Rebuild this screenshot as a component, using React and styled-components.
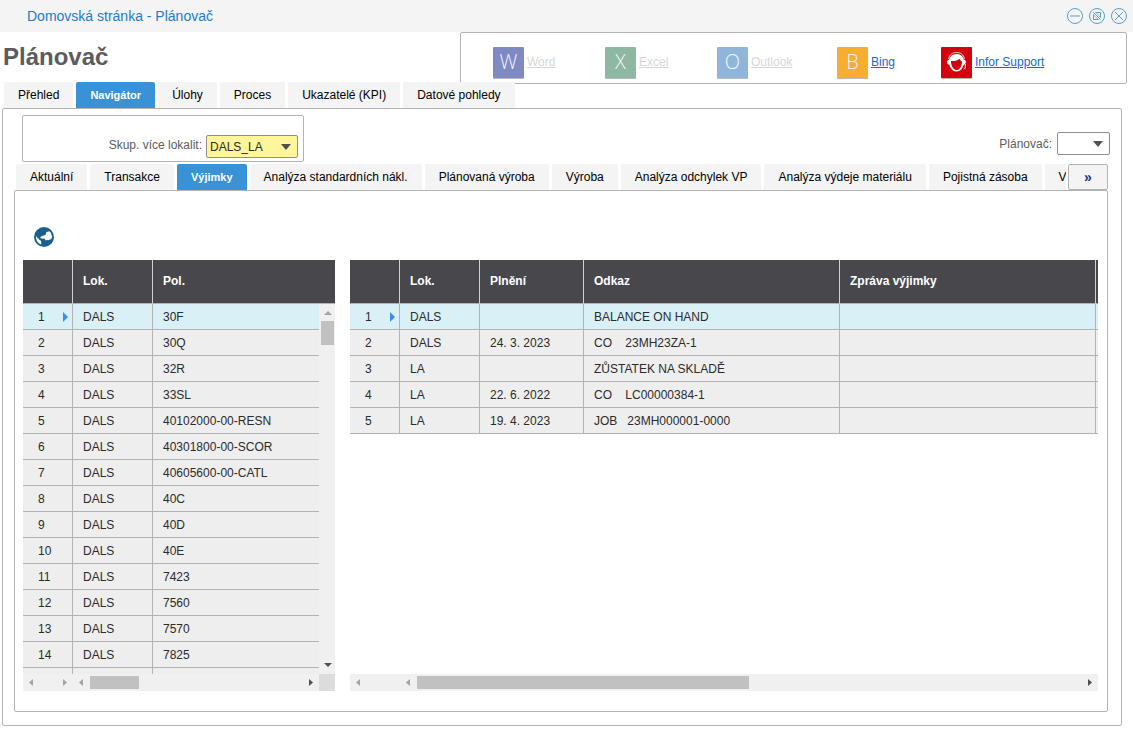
import styled, { createGlobalStyle, css } from 'styled-components'

const GlobalStyle = createGlobalStyle`
  * {
    box-sizing: border-box;
  }

  body {
    margin: 0;
    background: #fff;
    color: #2b2b2b;
    font-family: 'Liberation Sans', Arial, sans-serif;
    font-size: 12px;
    line-height: 16px;
  }

  button, select {
    font: inherit;
    margin: 0;
  }
`

const line = '#b3b3b3'
const blue = '#3992d6'

const TitleBar = styled.div`
  display: flex;
  align-items: center;
  justify-content: space-between;
  height: 32px;
  padding: 0 5px 0 27px;
  background: #f4f4f4;
  color: #1f7bc6;
  font-size: 14px;
`

const WindowButtons = styled.div`
  display: flex;
  gap: 4px;
`

const IconButton = styled.button`
  display: flex;
  padding: 0;
  border: none;
  background: none;
  cursor: pointer;
`

const Header = styled.header`
  display: flex;
  justify-content: space-between;
  height: 52px;
  padding: 0 6px 0 3px;
`

const Title = styled.h1`
  margin: 0;
  padding-top: 10px;
  color: #5c5b60;
  font-size: 24px;
  line-height: 30px;
`

const LinkBox = styled.div`
  display: grid;
  grid-template-columns: 112px 112px 120px 104px auto;
  align-items: center;
  width: 667px;
  padding: 8px 0 0 32px;
  border: 1px solid ${line};
  border-radius: 2px;
`

const AppLink = styled.a`
  display: flex;
  align-items: center;
  gap: 3px;
  color: ${props => props.$disabled ? '#d6d6d6' : '#1a66e0'};
  text-decoration: none;
`

const AppName = styled.span`
  text-decoration: underline;
`

const Tile = styled.span`
  display: flex;
  align-items: center;
  justify-content: center;
  width: 31px;
  height: 31px;
  border-radius: 1px;
  background: ${props => props.$color};
  box-shadow: 0 1px 0 #b9b9b9;
  color: rgba(255, 255, 255, 0.9);
  font-family: 'Open Sans', sans-serif;
  font-size: 20px;
  font-weight: 300;
`

const TabBar = styled.nav`
  position: relative;
  display: flex;
  height: 26px;
  ${props => props.$inner ? css`
    gap: 2px;
    margin: 2px 13px 0 13px;
  ` : css`
    gap: 3px;
    margin: -2px 0 0 4px;
  `}
`

const TabClip = styled.div`
  display: flex;
  flex: 1;
  gap: 3px;
  overflow: hidden;
`

const Tab = styled.button`
  flex: none;
  padding: 0 14px;
  border: none;
  border-radius: 2px 2px 0 0;
  background: ${props => props.$active ? blue : '#f4f4f4'};
  color: ${props => props.$active ? '#fff' : '#000'};
  font-size: ${props => props.$active ? '11px' : '12px'};
  font-weight: ${props => props.$active ? 'bold' : 'normal'};
  cursor: pointer;
`

const MoreButton = styled.button`
  width: 40px;
  padding: 0;
  border: 1px solid ${line};
  border-radius: 2px;
  background: #f4f4f4;
  color: #10398c;
  font-size: 14px;
  font-weight: bold;
`

const Panel = styled.main`
  margin: 0 11px 0 2px;
  border: 1px solid ${line};
  border-radius: 2px;
`

const InnerPanel = styled.section`
  margin: 0 13px 13px 11px;
  padding: 36px 9px 20px 8px;
  border: 1px solid ${line};
  border-radius: 2px;
`

const Filters = styled.div`
  display: flex;
  justify-content: space-between;
  align-items: flex-end;
  padding: 6px 11px 0 19px;
`

const GroupBox = styled.div`
  display: flex;
  align-items: flex-end;
  justify-content: flex-end;
  width: 282px;
  height: 47px;
  padding: 0 5px 3px;
  border: 1px solid ${line};
  border-radius: 2px;

  label {
    padding-bottom: 4px;
  }
`

const Field = styled.div`
  display: flex;
  align-items: center;
  gap: 4px;
  color: #5c5c5c;
`

const PlannerField = styled(Field)`
  padding-bottom: 7px;
  gap: 5px;
`

const SelectWrap = styled.div`
  position: relative;

  svg {
    position: absolute;
    top: 9px;
    right: 7px;
    pointer-events: none;
  }
`

const Select = styled.select`
  display: block;
  width: ${props => props.$width};
  height: 23px;
  padding: 0 3px;
  border: 1px solid #8e8e8e;
  border-radius: 2px;
  background: ${props => props.$required ? '#fff59a' : '#fff'};
  color: #2b2b2b;
  appearance: none;
`

const Toolbar = styled.div`
  display: flex;
  padding: 0 11px 13px;
`

const Grids = styled.div`
  display: flex;
  gap: 15px;
`

const Grid = styled.div`
  display: flex;
  flex-direction: column;
  flex: ${props => props.$width ? 'none' : '1'};
  width: ${props => props.$width};
  min-width: 0;
`

const GridMain = styled.div`
  display: flex;
  height: 414px;
`

const Viewport = styled.div`
  flex: 1;
  overflow: hidden;
`

const Table = styled.table`
  width: 100%;
  table-layout: fixed;
  border-collapse: separate;
  border-spacing: 0;
`

const Th = styled.th`
  height: 44px;
  padding: 0 0 1px ${props => props.$slim ? '0' : '10px'};
  border-bottom: 1px solid ${line};
  border-right: 1px solid #d0d0d0;
  background: #48474c;
  color: #fff;
  text-align: left;

  &:last-child {
    border-right: none;
  }
`

const Row = styled.tr`
  background: ${props => props.$selected ? '#daf0f7' : '#eee'};
`

const Td = styled.td`
  height: 26px;
  padding: 0 0 0 ${props => props.$slim ? '0' : '10px'};
  border-bottom: 1px solid ${line};
  border-right: 1px solid ${line};
  white-space: pre;

  &:last-child {
    border-right: none;
  }
`

const RowNumber = styled.div`
  display: flex;
  align-items: center;
  justify-content: space-between;
  padding: 0 4px 0 5px;
`

const Side = styled.div`
  display: flex;
  flex-direction: column;
  width: 16px;
`

const SideHead = styled.div`
  height: 44px;
  border-bottom: 1px solid ${line};
  background: #48474c;
`

const Bars = styled.div`
  display: flex;
  height: 17px;
`

const Scrollbar = styled.div`
  display: flex;
  flex-direction: ${props => props.$vertical ? 'column' : 'row'};
  flex: ${props => props.$width ? 'none' : '1'};
  width: ${props => props.$width};
  background: #f0f0f0;
`

const Track = styled.div`
  flex: 1;
  padding: ${props => props.$vertical ? '0 1px 0 2px' : '2px 0'};
`

const Thumb = styled.div`
  width: ${props => props.$vertical ? '100%' : props.$size};
  height: ${props => props.$vertical ? props.$size : '100%'};
  background: #c1c1c1;
`

const Corner = styled.div`
  width: 16px;
  background: #dcdcdc;
`

const ArrowButton = styled(IconButton)`
  width: ${props => props.$vertical ? '16px' : '17px'};
  height: 17px;
  align-items: center;
  justify-content: center;
  color: ${props => props.$dark ? '#505050' : '#a3a3a3'};
`

const shapes = {
  left: 'M10 5v7L6 8.5z',
  right: 'M7 5v7l4-3.5z',
  up: 'M5 11h8L9 7z',
  down: 'M5 6h8l-4 4z'
}

const Arrow = ({ dir, dark }) => (
  <ArrowButton
    type='button'
    aria-label={dir}
    $dark={dark}
    $vertical={dir === 'up' || dir === 'down'}
  >
    <svg width='17' height='17' fill='currentColor'><path d={shapes[dir]} /></svg>
  </ArrowButton>
)

const SelectArrow = () => (
  <svg width='10' height='6' fill='#505050'><path d='M0 0h10L5 6z' /></svg>
)

const MinimizeIcon = () => (
  <svg width='18' height='18' fill='none' stroke='#5a9dd0'>
    <circle cx='9' cy='9' r='7.5' />
    <path d='M4 9h10' />
  </svg>
)

const RestoreIcon = () => (
  <svg width='18' height='18' fill='none' stroke='#5a9dd0'>
    <circle cx='9' cy='9' r='7.5' />
    <path d='M7.5 5.5h5v5M5.5 7.5v5h5M5.5 5.5l7 7' />
    <path d='M8 5.5l4.5 5M5.5 8l5 4.5' strokeWidth='0.6' />
  </svg>
)

const CloseIcon = () => (
  <svg width='18' height='18' fill='none' stroke='#5a9dd0'>
    <circle cx='9' cy='9' r='7.5' />
    <path d='M5 5l8 8M13 5l-8 8' />
  </svg>
)

const SupportIcon = () => (
  <svg width='31' height='31' viewBox='0 0 31 31' fill='none'>
    <path d='M7.500 12C8.500 7.500 11.500 5.500 15.500 5.500s7 2 8 6.500' stroke='#fff' strokeWidth='0.8' />
    <path d='M15.500 7c4.500 0 7.500 3 7.500 7.500 0 5.500-3 10-7.500 10S8 20 8 14.500C8 10 11 7 15.500 7z' fill='#fff' />
    <path d='M8.500 12.500c-2 .5-2.500 1.500-2.500 2.500s.8 2.500 3 3zM22.500 12.500c1.800.5 2.500 1.500 2.500 2.500s-.8 2.500-3 3z' fill='#fff' />
    <path d='M10 14c3.500.3 6.500-.5 8.700-2.300.6 1.400 1.300 2.300 2.300 3-.2 4.500-2.200 8.300-5.500 8.300S10 18.500 10 14z' fill='#d5000e' />
    <path d='M24.300 17v4l-1.300 1.300' stroke='#fff' strokeWidth='1' />
  </svg>
)

const GlobeIcon = () => (
  <svg width='20' height='20' viewBox='0 0 20 20'>
    <circle cx='10' cy='10' r='10' fill='#1a5f8e' />
    <path d='M6 10.500l2-1.500 3.500-1L12.500 5l3-.8L17 6l1.200 4-1 2-2.200 1-3.500.3-1-1.800-2.500.2z' fill='#fff' />
    <path d='M2 8.500c.5 1.500 1 2.500 2.500 3l1 1.500 1.500.8.3 3.700C4 16.500 1.500 13 2 8.500z' fill='#fff' />
  </svg>
)

const mainTabs = ['Přehled', 'Navigátor', 'Úlohy', 'Proces', 'Ukazatelé (KPI)', 'Datové pohledy']

const innerTabs = [
  'Aktuální',
  'Transakce',
  'Výjimky',
  'Analýza standardních nákl.',
  'Plánovaná výroba',
  'Výroba',
  'Analýza odchylek VP',
  'Analýza výdeje materiálu',
  'Pojistná zásoba',
  'Vý'
]

const apps = [
  { name: 'Word', letter: 'W', color: '#7f8ac5', disabled: true },
  { name: 'Excel', letter: 'X', color: '#8eb8a1', disabled: true },
  { name: 'Outlook', letter: 'O', color: '#8fb6da', disabled: true },
  { name: 'Bing', letter: 'B', color: '#f6ae32' },
  { name: 'Infor Support', color: '#d5000e' }
]

const items = [
  '30F', '30Q', '32R', '33SL', '40102000-00-RESN', '40301800-00-SCOR', '40605600-00-CATL',
  '40C', '40D', '40E', '7423', '7560', '7570', '7825', ''
].map(item => [item && 'DALS', item])

const exceptions = [
  ['DALS', '', 'BALANCE ON HAND', '', ''],
  ['DALS', '24. 3. 2023', 'CO    23MH23ZA-1', '', ''],
  ['LA', '', 'ZŮSTATEK NA SKLADĚ', '', ''],
  ['LA', '22. 6. 2022', 'CO    LC00000384-1', '', ''],
  ['LA', '19. 4. 2023', 'JOB   23MH000001-0000', '', '']
]

const DataTable = ({ widths, heads, rows }) => (
  <Table>
    <colgroup>
      {widths.map((width, i) => <col key={i} width={width} />)}
    </colgroup>
    <thead>
      <tr>
        {heads.map((head, i) => <Th key={i} $slim={!head}>{head}</Th>)}
      </tr>
    </thead>
    <tbody>
      {rows.map((row, i) => (
        <Row key={i} $selected={i === 0}>
          <Td>
            <RowNumber>
              {row[0] && i + 1}
              {i === 0 && <svg width='5' height='10' fill='#4189e8'><path d='M0 0v10l5-5z' /></svg>}
            </RowNumber>
          </Td>
          {row.map((cell, j) => <Td key={j} $slim={!heads[j + 1]}>{cell}</Td>)}
        </Row>
      ))}
    </tbody>
  </Table>
)

const App = () => {
  return (
    <>
      <GlobalStyle />
      <TitleBar>
        <span>Domovská stránka - Plánovač</span>
        <WindowButtons>
          <IconButton type='button' aria-label='Minimalizovat'><MinimizeIcon /></IconButton>
          <IconButton type='button' aria-label='Obnovit'><RestoreIcon /></IconButton>
          <IconButton type='button' aria-label='Zavřít'><CloseIcon /></IconButton>
        </WindowButtons>
      </TitleBar>
      <Header>
        <Title>Plánovač</Title>
        <LinkBox>
          {apps.map(app => (
            <AppLink key={app.name} href='#' $disabled={app.disabled}>
              <Tile $color={app.color}>{app.letter || <SupportIcon />}</Tile>
              <AppName>{app.name}</AppName>
            </AppLink>
          ))}
        </LinkBox>
      </Header>
      <TabBar>
        {mainTabs.map(tab => (
          <Tab key={tab} type='button' $active={tab === 'Navigátor'}>{tab}</Tab>
        ))}
      </TabBar>
      <Panel>
        <Filters>
          <GroupBox>
            <Field>
              <label htmlFor='site-group'>Skup. více lokalit:</label>
              <SelectWrap>
                <Select id='site-group' $width='92px' $required>
                  <option>DALS_LA</option>
                </Select>
                <SelectArrow />
              </SelectWrap>
            </Field>
          </GroupBox>
          <PlannerField>
            <label htmlFor='planner'>Plánovač:</label>
            <SelectWrap>
              <Select id='planner' $width='53px'>
                <option></option>
              </Select>
              <SelectArrow />
            </SelectWrap>
          </PlannerField>
        </Filters>
        <TabBar $inner>
          <TabClip>
            {innerTabs.map(tab => (
              <Tab key={tab} type='button' $active={tab === 'Výjimky'}>{tab}</Tab>
            ))}
          </TabClip>
          <MoreButton type='button'>»</MoreButton>
        </TabBar>
        <InnerPanel>
          <Toolbar>
            <IconButton type='button' aria-label='Lokality'><GlobeIcon /></IconButton>
          </Toolbar>
          <Grids>
            <Grid $width='312px'>
              <GridMain>
                <Viewport>
                  <DataTable widths={[50, 80, 'auto']} heads={['', 'Lok.', 'Pol.']} rows={items} />
                </Viewport>
                <Side>
                  <SideHead />
                  <Scrollbar $vertical>
                    <Arrow dir='up' />
                    <Track $vertical><Thumb $vertical $size='24px' /></Track>
                    <Arrow dir='down' dark />
                  </Scrollbar>
                </Side>
              </GridMain>
              <Bars>
                <Scrollbar $width='50px'>
                  <Arrow dir='left' />
                  <Track />
                  <Arrow dir='right' />
                </Scrollbar>
                <Scrollbar>
                  <Arrow dir='left' />
                  <Track><Thumb $size='23%' /></Track>
                  <Arrow dir='right' dark />
                </Scrollbar>
                <Corner />
              </Bars>
            </Grid>
            <Grid>
              <GridMain>
                <Viewport>
                  <DataTable
                    widths={[50, 80, 104, 256, 256, 'auto']}
                    heads={['', 'Lok.', 'Plnění', 'Odkaz', 'Zpráva výjimky', '']}
                    rows={exceptions}
                  />
                </Viewport>
              </GridMain>
              <Bars>
                <Scrollbar $width='50px'>
                  <Arrow dir='left' />
                </Scrollbar>
                <Scrollbar>
                  <Arrow dir='left' />
                  <Track><Thumb $size='50%' /></Track>
                  <Arrow dir='right' dark />
                </Scrollbar>
              </Bars>
            </Grid>
          </Grids>
        </InnerPanel>
      </Panel>
    </>
  )
}

export default App
